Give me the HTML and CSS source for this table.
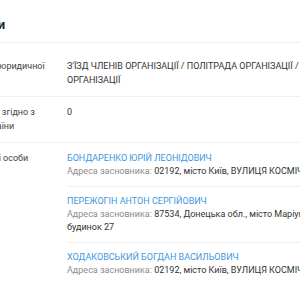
FILE: index.html
```html
<!DOCTYPE html>
<html lang="uk">
<head>
    <meta charset="UTF-8">
    <meta name="viewport" content="width=device-width, initial-scale=1.0">
    <title>Усі фундатори</title>
    <link rel="stylesheet" href="styles.css">
</head>
<body>

<div class="card">
    <div class="card-title">Усі фундатори</div>

    <div class="info-row first">
        <div class="info-label">Органи управління юридичної</div>
        <div class="info-value">З'ЇЗД ЧЛЕНІВ ОРГАНІЗАЦІЇ / ПОЛІТРАДА ОРГАНІЗАЦІЇ / ПРЕЗИДІЯ ОРГАНІЗАЦІЇ</div>
    </div>

    <div class="info-row">
        <div class="info-label">Кількість учасників згідно з реєстром ДФС України</div>
        <div class="info-value">0</div>
    </div>

    <div class="info-row">
        <div class="info-label">Засновники фізичні особи</div>
        <div class="info-value">
            <div class="founder">
                <a class="founder-name" href="#">БОНДАРЕНКО ЮРІЙ ЛЕОНІДОВИЧ</a>
                <div class="founder-address">Адреса засновника: <span>02192, місто Київ, ВУЛИЦЯ КОСМІЧНА, будинок 12</span></div>
            </div>
            <div class="founder">
                <a class="founder-name" href="#">ПЕРЕЖОГІН АНТОН СЕРГІЙОВИЧ</a>
                <div class="founder-address">Адреса засновника: <span>87534, Донецька обл., місто Маріуполь, ВУЛИЦЯ МИРУ, будинок 27</span></div>
            </div>
            <div class="founder">
                <a class="founder-name" href="#">ХОДАКОВСЬКИЙ БОГДАН ВАСИЛЬОВИЧ</a>
                <div class="founder-address">Адреса засновника: <span>02192, місто Київ, ВУЛИЦЯ КОСМІЧНА, будинок 12</span></div>
            </div>
        </div>
    </div>
</div>

</body>
</html>
```

FILE: styles.css
```css
* {
    margin: 0;
    padding: 0;
    box-sizing: border-box;
}

html, body {
    height: 100%;
    overflow: hidden;
    background-color: #fff;
    font-family: Roboto, "Noto Sans", sans-serif;
    color: #333;
}

/* Card is wider than the window, the label column sits to the left */
.card {
    width: 560px;
    margin-left: -83px;
}

.card-title {
    font-size: 13px;
    font-weight: 700;
    line-height: 18px;
    padding: 16px 0 8px;
    color: #222;
    border-bottom: 1px solid #f0f0f0;
}

/* One label / value pair */
.info-row {
    display: grid;
    grid-template-columns: 138px 327px;
    column-gap: 12px;
    padding: 9px 0;
    font-size: 9px;
    line-height: 13.5px;
    border-bottom: 1px solid #f0f0f0;
}

.info-row.first {
    margin-top: 8px;
}

.info-row:last-child {
    border-bottom: none;
}

.info-label {
    color: #444;
}

.info-value {
    color: #333;
}

/* Founders list inside the value column */
.founder {
    padding: 8px 0;
    border-bottom: 1px solid #f0f0f0;
    line-height: 13px;
}

.founder:first-child {
    padding-top: 0;
}

.founder:last-child {
    border-bottom: none;
}

.founder-name {
    display: block;
    color: #3b97de;
    text-decoration: none;
}

.founder-address {
    color: #8c8c8c;
}

.founder-address span {
    color: #333;
}
```
